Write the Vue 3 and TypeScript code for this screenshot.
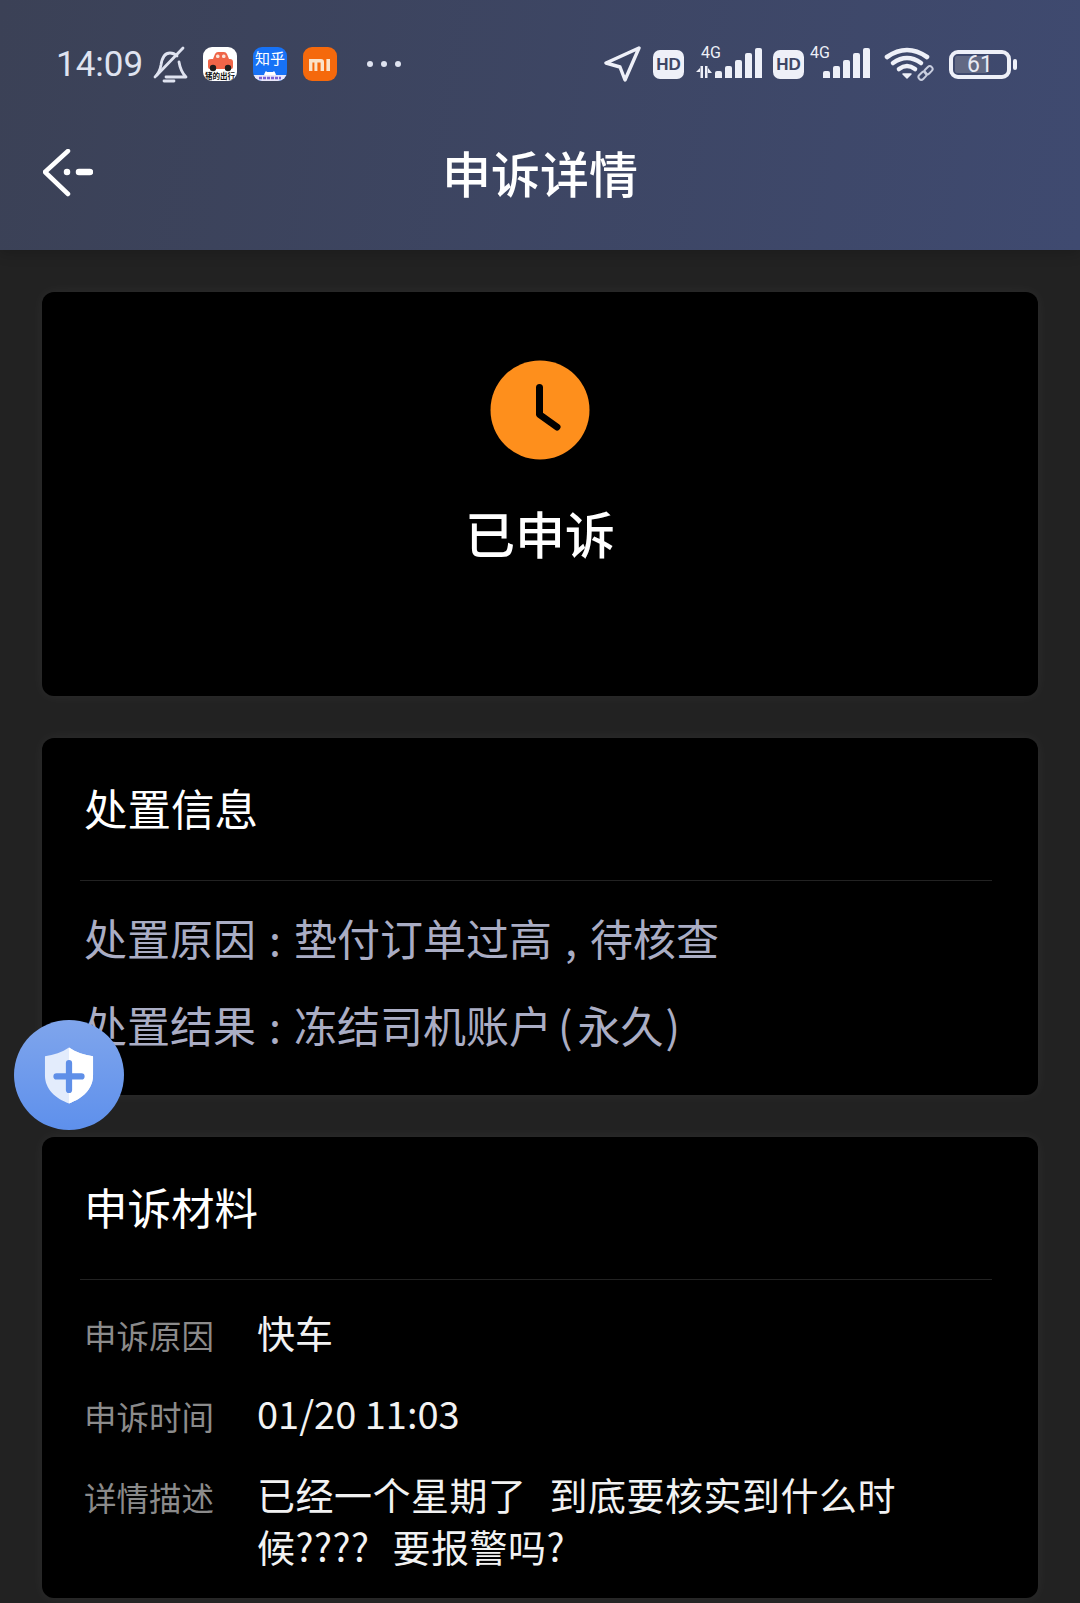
<template>
  <div class="page">
    <header class="top">
      <div class="status">
        <div class="status-left">
          <span class="clock">14:09</span>
          <svg class="bell" viewBox="0 0 36 37" fill="none" stroke="#dfe3f0" stroke-width="2.800" stroke-linecap="round" stroke-linejoin="round">
            <path d="M3 31c3-3 5-6 6-12 1-7 4-12 9-12 3 0 5 1 7 3" />
            <path d="M27 16c1 6 3 11 7 15H14" />
            <path d="M12 35h10" />
            <path d="M31 2 5 29" />
          </svg>
          <div class="app app-car">
            <svg viewBox="0 0 34 34" width="34" height="34">
              <path d="M5 14q0-2 3-2h2l2-5q1-2 3-2h6q2 0 3 2l2 5h1q3 0 3 3v5q0 2-2 2H7q-2 0-2-2z" fill="#ef6548" />
              <rect x="13" y="7.500" width="3.500" height="3.500" rx="1.500" fill="#fbe3d8" />
              <rect x="19" y="7.500" width="3.500" height="3.500" rx="1.500" fill="#fbe3d8" />
              <circle cx="10" cy="21" r="3.200" fill="#1d1d1d" />
              <circle cx="25" cy="21" r="3.200" fill="#1d1d1d" />
            </svg>
            <span class="car-label">猪的出行</span>
          </div>
          <div class="app app-zhihu">
            <span class="zhihu-label">知乎</span>
            <svg class="zhihu-bear" viewBox="0 0 34 13" width="34" height="13">
              <path d="M11 8c0-2 1-4 2-5l1 1h6l1-1c1 1 2 3 2 5z" fill="#fff" />
              <rect x="0" y="7" width="34" height="6" fill="#e9e7fa" />
              <path d="M6 10h22" stroke="#7a63d6" stroke-width="2.500" stroke-dasharray="3 1" />
            </svg>
          </div>
          <div class="app app-mi">
            <svg viewBox="0 0 34 34" width="34" height="34" fill="#fbe3c9">
              <path d="M6 12h12a3 3 0 0 1 3 3v9h-3.400v-8.600h-3.200V24h-3v-8.600H9.400V24H6z" />
              <rect x="23.400" y="12" width="3.600" height="12" />
            </svg>
          </div>
          <div class="dots"><i></i><i></i><i></i></div>
        </div>
        <div class="status-right">
          <svg class="loc" viewBox="0 0 37 36" fill="none" stroke="#eef0f8" stroke-width="3.400" stroke-linejoin="round">
            <path d="M35 2 2 17l14 4 5 13z" />
          </svg>
          <span class="hd">HD</span>
          <div class="signal">
            <span class="net">4G</span>
            <svg class="arrows" viewBox="0 0 16 12" width="16" height="12" fill="#eef0f8">
              <path d="M0 6l4-4v4zM4.500 0H7v12H4.500zM9 0h2.500v12H9zM12 2l4 5h-4z" />
            </svg>
            <i v-for="h in bars" :key="h" :style="{ height: h + 'px' }"></i>
          </div>
          <span class="hd hd-second">HD</span>
          <div class="signal signal-second">
            <span class="net net-second">4G</span>
            <i v-for="h in bars" :key="h" :style="{ height: h + 'px' }"></i>
          </div>
          <svg class="wifi" viewBox="0 0 50 36" fill="none" stroke="#eef0f8" stroke-linecap="round">
            <path d="M3 11Q23-3 43 11" stroke-width="4.600" />
            <path d="M9 17q14-10 28 0" stroke-width="4.600" />
            <path d="M15 23q8-6 16 0" stroke-width="4.600" />
            <path d="M19 28h8l-4 4z" fill="#eef0f8" stroke-width="1.500" stroke-linejoin="round" />
            <g stroke="#c9cedf" stroke-width="2">
              <rect x="34" y="27" width="9" height="5.500" rx="2.700" transform="rotate(-45 38.500 29.700)" />
              <rect x="40" y="21.500" width="9" height="5.500" rx="2.700" transform="rotate(-45 44.500 24.200)" />
            </g>
          </svg>
          <div class="battery">
            <div class="battery-body">
              <div class="battery-fill" :style="{ width: '61%' }"></div>
              <span>61</span>
            </div>
            <div class="battery-cap"></div>
          </div>
        </div>
      </div>
      <div class="nav">
        <svg class="back" viewBox="0 0 50 48" fill="none" stroke="#fff" stroke-width="4.500" stroke-linecap="round" stroke-linejoin="round">
          <path d="M25 2 2 23l23 22" />
          <circle cx="24" cy="23" r="1.500" fill="#fff" stroke-width="3.500" />
          <path d="M36 23h11" stroke-width="6.500" />
        </svg>
        <h1>申诉详情</h1>
      </div>
    </header>

    <main class="content">
      <section class="card status-card">
        <svg class="clock-icon" viewBox="0 0 100 100">
          <circle cx="50" cy="50" r="49.500" fill="#fe8f1c" />
          <path d="M49.500 27.600v26.900L67 67" fill="none" stroke="#000" stroke-width="7" stroke-linecap="round" stroke-linejoin="round" />
        </svg>
        <div class="status-text">已申诉</div>
      </section>

      <section class="card info-card">
        <h2>处置信息</h2>
        <div class="line"></div>
        <p class="info-row">处置原因<span class="punct">:</span>垫付订单过高<span class="punct">,</span>待核查</p>
        <p class="info-row">处置结果<span class="punct">:</span>冻结司机账户<span class="paren-l">(</span>永久<span class="paren-r">)</span></p>
      </section>

      <section class="card material-card">
        <h2>申诉材料</h2>
        <div class="line"></div>
        <div class="fields">
          <div v-for="f in fields" :key="f.label" class="field">
            <span class="field-label">{{ f.label }}</span>
            <span class="field-value" :class="{ 'field-desc': f.long }">{{ f.value }}</span>
          </div>
        </div>
      </section>
    </main>

    <!-- floating safety button -->
    <div class="fab">
      <svg viewBox="0 0 52 60" width="50" height="59">
        <path d="M26 1C33 6 42 9 51 10v20c0 14-11 24-25 29C12 54 1 44 1 30V10C10 9 19 6 26 1z" fill="#e3ecfc" />
        <path d="M26 1C33 6 42 9 51 10v20c0 14-11 24-25 29z" fill="#fff" />
        <path d="M26 17v28M13 31h26" stroke="#5f8fe8" stroke-width="6.500" stroke-linecap="round" />
      </svg>
    </div>
  </div>
</template>

<script setup lang="ts">
const bars: number[] = [7, 12, 18, 25, 30]

const fields = [
  { label: '申诉原因', value: '快车', long: false },
  { label: '申诉时间', value: '01/20 11:03', long: false },
  { label: '详情描述', value: '已经一个星期了  到底要核实到什么时候????  要报警吗?', long: true }
]
</script>

<style>
html, body {
  background: #222;
}
</style>

<style scoped>
.page {
  position: relative;
  width: 1080px;
  height: 1603px;
  overflow: hidden;
  background: #222;
  font-family: "Noto Sans CJK SC", "Noto Sans", sans-serif;
  color: #fff;
}

.top {
  position: relative;
  height: 250px;
  box-sizing: border-box;
  padding: 44px 42px 0;
  background: linear-gradient(100deg, #3b4156, #3f4a70);
  box-shadow: 0 4px 12px rgba(0, 0, 0, 0.18);
}

.status {
  display: flex;
  justify-content: space-between;
  align-items: center;
  height: 40px;
}

.status-left,
.status-right {
  display: flex;
  align-items: center;
}

.status-left {
  margin-left: 14px;
}

.clock {
  width: 96px;
  font-family: Roboto, sans-serif;
  font-size: 35px;
  color: #dfe3f0;
}

.bell {
  width: 36px;
  height: 37px;
}

.app {
  position: relative;
  flex: none;
  width: 34px;
  height: 34px;
  margin-left: 16px;
  border-radius: 9px;
  overflow: hidden;
}

.app-car {
  margin-left: 15px;
  background: #fff;
}

.car-label {
  position: absolute;
  left: 0;
  right: 0;
  bottom: 1px;
  text-align: center;
  font-size: 7.500px;
  font-weight: 700;
  line-height: 8px;
  color: #111;
  white-space: nowrap;
}

.app-zhihu {
  background: #1772f6;
}

.zhihu-label {
  display: block;
  padding-top: 3px;
  text-align: center;
  font-size: 15px;
  line-height: 16px;
}

.zhihu-bear {
  position: absolute;
  left: 0;
  bottom: 0;
}

.app-mi {
  background: #f5690c;
}

.dots {
  display: flex;
  gap: 8px;
  margin-left: 30px;
}

.dots i {
  width: 6px;
  height: 6px;
  border-radius: 50%;
  background: #dfe3f0;
}

.status-right {
  margin-right: 21px;
}

.loc {
  width: 37px;
  height: 36px;
  margin-right: 1px;
}

.hd {
  width: 31px;
  height: 29px;
  margin-left: 11px;
  border-radius: 7px;
  background: #eef0f8;
  color: #3d4564;
  font-family: "Liberation Sans", sans-serif;
  font-size: 17px;
  font-weight: 700;
  line-height: 29px;
  text-align: center;
}

.signal {
  position: relative;
  display: flex;
  align-items: flex-end;
  gap: 3px;
  height: 30px;
  margin-left: 12px;
  margin-bottom: 2px;
}

.signal i {
  width: 7px;
  background: #eef0f8;
  border-radius: 2px 2px 0 0;
}

.signal-second {
  margin-left: 19px;
}

.net {
  position: absolute;
  left: 5px;
  top: -3px;
  font-family: Roboto, sans-serif;
  font-size: 16px;
  line-height: 16px;
  color: #eef0f8;
}

.net-second {
  left: -13px;
}

.wifi {
  width: 50px;
  height: 36px;
  margin-left: 14px;
}

.battery {
  display: flex;
  align-items: center;
  margin-left: 15px;
}

.battery-body {
  position: relative;
  width: 62px;
  height: 29px;
  box-sizing: border-box;
  border: 4px solid #eef0f8;
  border-radius: 9px;
}

.battery-fill {
  position: absolute;
  left: 2px;
  top: 2px;
  bottom: 2px;
  background: #626983;
  border-radius: 2px;
}

.battery-body span {
  position: absolute;
  inset: 0;
  text-align: center;
  font-family: Roboto, sans-serif;
  font-size: 23px;
  line-height: 21px;
  color: #e8eaf4;
}

.battery-cap {
  width: 4px;
  height: 11px;
  margin-left: 2px;
  border-radius: 2px;
  background: #eef0f8;
}

.nav {
  position: relative;
  display: flex;
  justify-content: center;
  align-items: center;
  height: 70px;
  margin-top: 53px;
}

.back {
  position: absolute;
  left: 1px;
  top: 12px;
  width: 50px;
  height: 48px;
}

.nav h1 {
  margin: 0;
  font-size: 49px;
  font-weight: 500;
  line-height: 70px;
}

.content {
  display: flex;
  flex-direction: column;
  gap: 42px;
  padding: 42px 42px 0;
}

.card {
  background: #000;
  border-radius: 12px;
  box-shadow: 0 0 14px rgba(255, 255, 255, 0.05);
}

.status-card {
  display: flex;
  flex-direction: column;
  align-items: center;
  height: 404px;
  box-sizing: border-box;
  padding-top: 68px;
}

.clock-icon {
  width: 100px;
  height: 100px;
}

.status-text {
  margin-top: 37px;
  font-size: 50px;
  line-height: 70px;
  font-weight: 500;
}

.info-card {
  height: 357px;
  box-sizing: border-box;
  padding: 0 42px;
}

h2 {
  margin: 0;
  height: 142px;
  font-size: 43.500px;
  font-weight: 400;
  line-height: 140px;
}

.line {
  width: 912px;
  height: 1px;
  margin-left: -4px;
  background: #222;
}

.info-row {
  margin: 0;
  font-size: 43px;
  line-height: 87px;
  color: #aaadc4;
  white-space: nowrap;
}

.info-row:first-of-type {
  margin-top: 13px;
}

.punct {
  margin: 0 13px;
}

.paren-l {
  margin: 0 5px 0 6px;
}

.paren-r {
  margin-left: 2px;
}

.material-card {
  height: 461px;
  box-sizing: border-box;
  padding: 0 42px;
}

.fields {
  display: flex;
  flex-direction: column;
  gap: 26px;
  padding-top: 26px;
}

.field {
  display: flex;
}

.field-label {
  flex: none;
  width: 173px;
  margin-top: 3px;
  font-size: 32.500px;
  line-height: 52px;
  color: #8b8b8b;
}

.field-value {
  width: 660px;
  font-size: 38px;
  line-height: 52px;
  color: #f2f2f2;
  white-space: pre-wrap;
}

.field-desc {
  letter-spacing: 0.5px;
  word-spacing: 2.500px;
}

.fab {
  position: absolute;
  left: 14px;
  top: 1020px;
  display: flex;
  align-items: center;
  justify-content: center;
  width: 110px;
  height: 110px;
  border-radius: 50%;
  background: linear-gradient(180deg, #7fa5ec, #5e90ec);
}
</style>
